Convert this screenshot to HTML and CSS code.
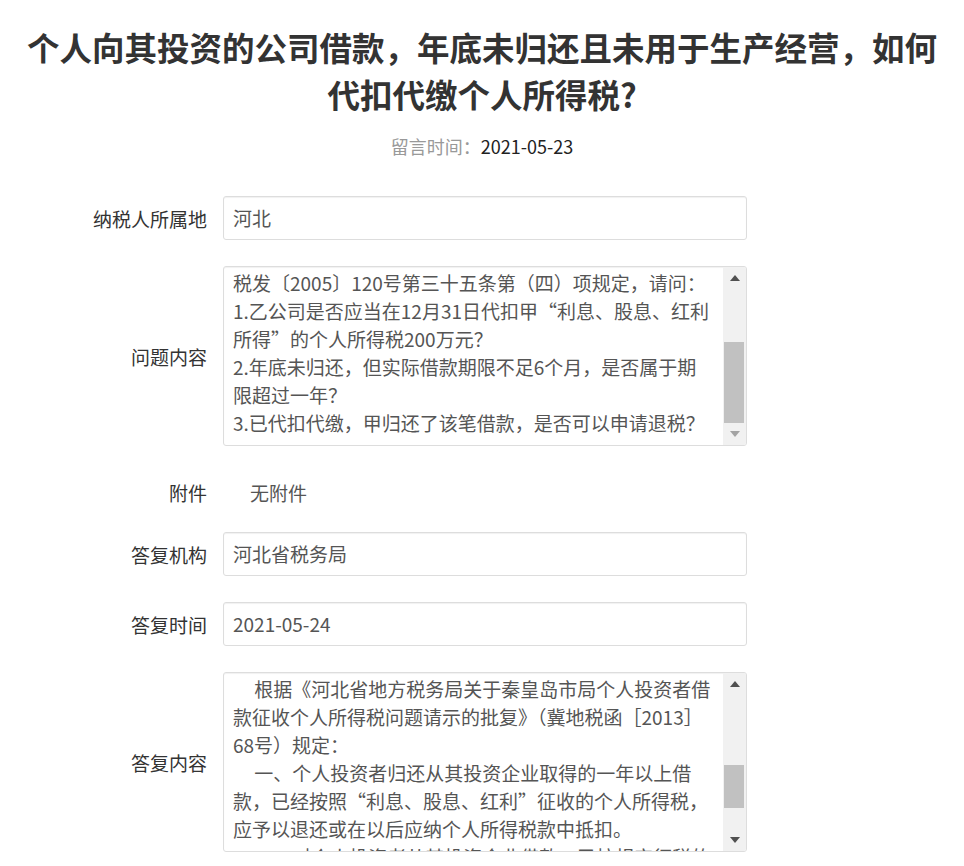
FILE: index.html
```html
<!DOCTYPE html>
<html lang="zh-CN">
<head>
  <meta charset="UTF-8">
  <meta name="viewport" content="width=device-width, initial-scale=1.0">
  <title>留言详情</title>
  <link rel="stylesheet" href="styles.css">
</head>
<body>
  <h1 class="title">个人向其投资的公司借款，年底未归还且未用于生产经营，如何代扣代缴个人所得税?</h1>
  <p class="msg-time"><span class="msg-time-label">留言时间：</span>2021-05-23</p>

  <!-- Detail Form -->
  <div class="detail">
    <div class="row">
      <label class="row-label">纳税人所属地</label>
      <input class="field" type="text" value="河北" readonly>
    </div>

    <div class="row">
      <label class="row-label">问题内容</label>
      <div class="area-box">
        <textarea class="area" id="question" readonly>
甲个人投资乙公司，2020年7月1日甲向乙公司借款1000
万元，截至2020年12月31日尚未归还，且该借款未用于
乙公司生产经营。根据《国家税务总局关于印发〈个人所
得税管理办法〉的通知》（国
税发〔2005〕120号第三十五条第（四）项规定，请问：
1.乙公司是否应当在12月31日代扣甲“利息、股息、红利
所得”的个人所得税200万元？
2.年底未归还，但实际借款期限不足6个月，是否属于期
限超过一年？
3.已代扣代缴，甲归还了该笔借款，是否可以申请退税？</textarea>
        <div class="scrollbar">
          <span class="sb-btn sb-up"></span>
          <div class="sb-track"><div class="sb-thumb"></div></div>
          <span class="sb-btn sb-down"></span>
        </div>
      </div>
    </div>

    <div class="row row-plain">
      <label class="row-label">附件</label>
      <span class="plain">无附件</span>
    </div>

    <div class="row">
      <label class="row-label">答复机构</label>
      <input class="field" type="text" value="河北省税务局" readonly>
    </div>

    <div class="row">
      <label class="row-label">答复时间</label>
      <input class="field" type="text" value="2021-05-24" readonly>
    </div>

    <div class="row">
      <label class="row-label">答复内容</label>
      <div class="area-box">
        <textarea class="area" id="answer" readonly>
您好！您提交的问题已收悉，现针对您所提供的信息答复
如下：
     根据《国家税务总局关于印发〈个人所得税管理办法〉
的通知》（国税发〔2005〕120号）第三十五条第（四）项
规定：加强个人投资者从其投资企业借款的管理，对期限
超过一年又未用于企业生产经营的借款，严格按照有关规
定征税。
     根据《财政部 国家税务总局关于规范个人投资者个人
所得税征收管理的通知》（财税〔2003〕158号）第二条
规定执行。
     根据《河北省地方税务局关于秦皇岛市局个人投资者借
款征收个人所得税问题请示的批复》（冀地税函［2013］
68号）规定：
     一、个人投资者归还从其投资企业取得的一年以上借
款，已经按照“利息、股息、红利”征收的个人所得税，
应予以退还或在以后应纳个人所得税款中抵扣。
     二、对个人投资者从其投资企业借款，已按规定征税的
借款在归还后，纳税人可凭相关资料向主管税务机关申请
办理退税。</textarea>
        <div class="scrollbar">
          <span class="sb-btn sb-up"></span>
          <div class="sb-track"><div class="sb-thumb"></div></div>
          <span class="sb-btn sb-down"></span>
        </div>
      </div>
    </div>
  </div>

  <script>
    // Draw the scrollbar thumb from the text area's scroll position
    function syncBar(area) {
      const bar = area.nextElementSibling;
      const track = bar.querySelector('.sb-track');
      const thumb = bar.querySelector('.sb-thumb');
      const h = track.clientHeight;
      thumb.style.height = (h * area.clientHeight / area.scrollHeight) + 'px';
      thumb.style.marginTop = (h * area.scrollTop / area.scrollHeight) + 'px';

      const atTop = area.scrollTop <= 0;
      const atBottom = area.scrollTop + area.clientHeight >= area.scrollHeight - 1;
      bar.querySelector('.sb-up').classList.toggle('disabled', atTop);
      bar.querySelector('.sb-down').classList.toggle('disabled', atBottom);
    }

    const question = document.getElementById('question');
    const answer = document.getElementById('answer');
    question.scrollTop = question.scrollHeight; // show the end of the question
    answer.scrollTop = 286;

    [question, answer].forEach((area) => {
      syncBar(area);
      area.addEventListener('scroll', () => syncBar(area));
    });
  </script>
</body>
</html>
```

FILE: styles.css
```css
body {
  font-family: "Noto Sans CJK SC", "Noto Sans", sans-serif;
  margin: 8px;
  color: #333;
  background: #fff;
}
.title {
  margin: 15px 0 0;
  padding: 0 10px;
  font-size: 32.5px;
  line-height: 47px;
  font-weight: bold;
  text-align: center;
  color: #333;
}
.msg-time {
  margin: 15px 0 0;
  font-size: 18px;
  line-height: 28px;
  text-align: center;
  color: #222;
}
.msg-time-label {
  color: #999;
}
.detail {
  margin-top: 36px;
}
.row {
  display: flex;
  align-items: center;
  margin-bottom: 26px;
}
.row-label {
  width: 199px;
  margin-right: 16px;
  text-align: right;
  font-size: 19px;
  color: #333;
}
.field {
  box-sizing: border-box;
  width: 524px;
  height: 44px;
  padding: 0 9px 2px;
  border: 1px solid #ddd;
  border-radius: 3px;
  box-shadow: inset 0 1px 1px rgba(0, 0, 0, 0.06);
  font-family: inherit;
  font-size: 19px;
  color: #555;
  background: #fff;
  outline: none;
}
.area-box {
  box-sizing: border-box;
  display: flex;
  width: 524px;
  height: 180px;
  border: 1px solid #ddd;
  border-radius: 3px;
  box-shadow: inset 0 1px 1px rgba(0, 0, 0, 0.06);
  overflow: hidden;
}
.area {
  flex: 1;
  min-width: 0;
  margin: 0;
  padding: 8px 4px 8px 9px;
  border: none;
  background: transparent;
  font-family: inherit;
  font-size: 19px;
  line-height: 28px;
  color: #555;
  resize: none;
  outline: none;
  overflow: hidden;
  white-space: pre;
}
.scrollbar {
  display: flex;
  flex-direction: column;
  width: 23px;
  background: #f1f1f1;
}
.sb-btn {
  display: flex;
  align-items: center;
  justify-content: center;
  height: 22px;
  flex-shrink: 0;
}
.sb-up::before,
.sb-down::before {
  content: "";
  width: 0;
  height: 0;
  border-left: 5px solid transparent;
  border-right: 5px solid transparent;
}
.sb-up::before {
  border-bottom: 6px solid #505050;
}
.sb-down::before {
  border-top: 6px solid #505050;
}
.sb-up.disabled::before {
  border-bottom-color: #a3a3a3;
}
.sb-down.disabled::before {
  border-top-color: #a3a3a3;
}
.sb-track {
  flex: 1;
  padding: 0 2px 0 1px;
}
.sb-thumb {
  background: #c1c1c1;
}
.row-plain {
  height: 40px;
  margin-bottom: 20px;
}
.plain {
  padding-left: 27px;
  font-size: 19px;
  color: #555;
}
```
